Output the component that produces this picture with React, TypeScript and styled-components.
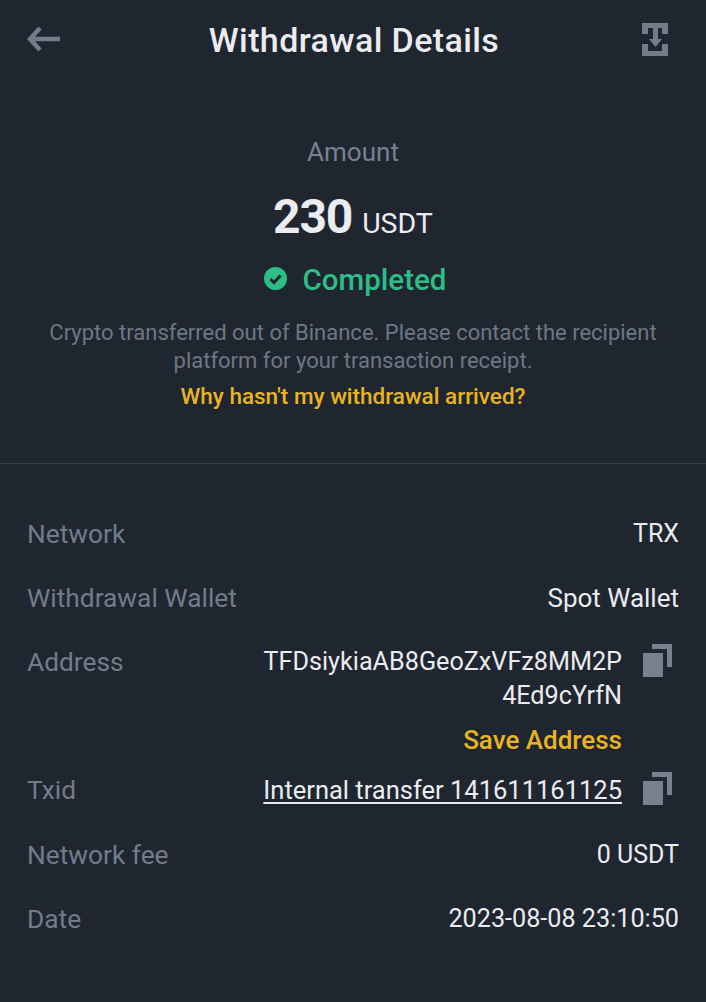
import styled, { createGlobalStyle } from "styled-components";

const GlobalStyle = createGlobalStyle`
  html, body {
    margin: 0;
    padding: 0;
    background: #1f2630;
  }
  * {
    box-sizing: border-box;
  }
`;

const Page = styled.main`
  width: 706px;
  height: 1002px;
  overflow: hidden;
  background: #1f2630;
  color: #eaecef;
  font-family: Roboto, "Noto Sans", sans-serif;
`;

const Header = styled.header`
  height: 78px;
  padding: 0 38px 0 27px;
  display: flex;
  align-items: center;
  justify-content: space-between;
`;

const Title = styled.h1`
  margin: 2px 0 0 5px;
  font-size: 34px;
  line-height: 40px;
  letter-spacing: 0.4px;
  font-weight: 500;
  color: #eaecef;
`;

const IconButton = styled.span`
  display: flex;
  color: #737b8c;
`;

const Summary = styled.section`
  height: 386px;
  padding-top: 59px;
  border-bottom: 1px solid #343b46;
  display: flex;
  flex-direction: column;
  align-items: center;
  text-align: center;
`;

const AmountLabel = styled.div`
  font-size: 26px;
  line-height: 30px;
  color: #79808f;
`;

const AmountRow = styled.div`
  margin-top: 25px;
  display: flex;
  align-items: baseline;
  gap: 10px;
  height: 50px;
  line-height: 50px;
`;

const AmountValue = styled.span`
  font-size: 48px;
  font-weight: 700;
  letter-spacing: -1.2px;
  color: #eaecef;
`;

const AmountUnit = styled.span`
  font-size: 28.500px;
  color: #eaecef;
`;

const Status = styled.div`
  margin-top: 20px;
  padding-left: 4px;
  display: flex;
  align-items: center;
  gap: 16px;
  height: 36px;
  font-size: 29.500px;
  font-weight: 500;
  color: #2ebd85;

  svg {
    margin-top: -4px;
  }
`;

const Description = styled.p`
  margin: 21px 0 0;
  font-size: 22px;
  line-height: 28px;
  color: #6f7685;
`;

const HelpLink = styled.a`
  margin-top: 7px;
  font-size: 22.500px;
  line-height: 28px;
  font-weight: 500;
  color: #e8b420;
`;

const Details = styled.section`
  padding: 56px 27px 0;
  display: flex;
  flex-direction: column;
`;

const Row = styled.div<{ $tight?: boolean }>`
  padding-bottom: ${(p) => (p.$tight ? "22px" : "36px")};
  display: flex;
  justify-content: space-between;
  align-items: flex-start;
  font-size: 25px;
  line-height: 28px;
`;

const Label = styled.span`
  font-size: 26.300px;
  color: #737b8a;
`;

const ValueGroup = styled.div`
  display: flex;
  align-items: flex-start;
`;

const Value = styled.div<{ $size?: number }>`
  font-size: ${(p) => p.$size ?? 25}px;
  text-align: right;
  color: #eaecef;
`;

const AddressLine = styled.div`
  height: 34px;
`;

const SaveAddress = styled.div`
  margin-top: 10px;
  font-size: 26px;
  font-weight: 500;
  color: #e8b420;
`;

const UnderlinedValue = styled.span`
  text-decoration: underline;
  text-underline-offset: 3px;
  text-decoration-thickness: 2px;
`;

const CopyButton = styled.span`
  margin: -4px 7px 0 21px;
  display: flex;
  color: #79808f;
`;

const BackIcon = () => (
  <svg width="34" height="26" viewBox="0 0 34 26" fill="none">
    <path d="M13 2 3 13l10 11M3 13h30" stroke="currentColor" strokeWidth="4.500" />
  </svg>
);

const SaveIcon = () => (
  <svg width="26" height="33" viewBox="0 0 26 33" fill="currentColor">
    <path d="M0 0h26v11h-6V5H6v6H0zM0 21h6v7h14v-7h6v12H0z" />
    <path d="M11 5h5v11h4l-6.500 8L7 16h4z" />
  </svg>
);

const CopyIcon = () => (
  <svg width="29" height="33" viewBox="0 0 29 33" fill="currentColor">
    <path d="M9 0h20v23h-5V5H9z" />
    <path d="M0 9h20v24H0z" />
  </svg>
);

const CheckIcon = () => (
  <svg width="23" height="23" viewBox="0 0 23 23">
    <circle cx="11.500" cy="11.500" r="11.500" fill="currentColor" />
    <path d="m6.500 12 3.500 3.500 6.500-7" fill="none" stroke="#1f2630" strokeWidth="3" />
  </svg>
);

const App = () => (
  <Page>
    <GlobalStyle />
    <Header>
      <IconButton>
        <BackIcon />
      </IconButton>
      <Title>Withdrawal Details</Title>
      <IconButton>
        <SaveIcon />
      </IconButton>
    </Header>
    <Summary>
      <AmountLabel>Amount</AmountLabel>
      <AmountRow>
        <AmountValue>230</AmountValue>
        <AmountUnit>USDT</AmountUnit>
      </AmountRow>
      <Status>
        <CheckIcon />
        Completed
      </Status>
      <Description>
        Crypto transferred out of Binance. Please contact the recipient
        <br />
        platform for your transaction receipt.
      </Description>
      <HelpLink>Why hasn't my withdrawal arrived?</HelpLink>
    </Summary>
    <Details>
      <Row>
        <Label>Network</Label>
        <Value>TRX</Value>
      </Row>
      <Row>
        <Label>Withdrawal Wallet</Label>
        <Value $size={26}>Spot Wallet</Value>
      </Row>
      <Row $tight>
        <Label>Address</Label>
        <ValueGroup>
          <Value $size={25.2}>
            <AddressLine>TFDsiykiaAB8GeoZxVFz8MM2P</AddressLine>
            <AddressLine>4Ed9cYrfN</AddressLine>
            <SaveAddress>Save Address</SaveAddress>
          </Value>
          <CopyButton>
            <CopyIcon />
          </CopyButton>
        </ValueGroup>
      </Row>
      <Row>
        <Label>Txid</Label>
        <ValueGroup>
          <Value $size={25.5}>
            <UnderlinedValue>Internal transfer 141611161125</UnderlinedValue>
          </Value>
          <CopyButton>
            <CopyIcon />
          </CopyButton>
        </ValueGroup>
      </Row>
      <Row>
        <Label>Network fee</Label>
        <Value>0 USDT</Value>
      </Row>
      <Row>
        <Label>Date</Label>
        <Value $size={25.2}>2023-08-08 23:10:50</Value>
      </Row>
    </Details>
  </Page>
);

export default App;
